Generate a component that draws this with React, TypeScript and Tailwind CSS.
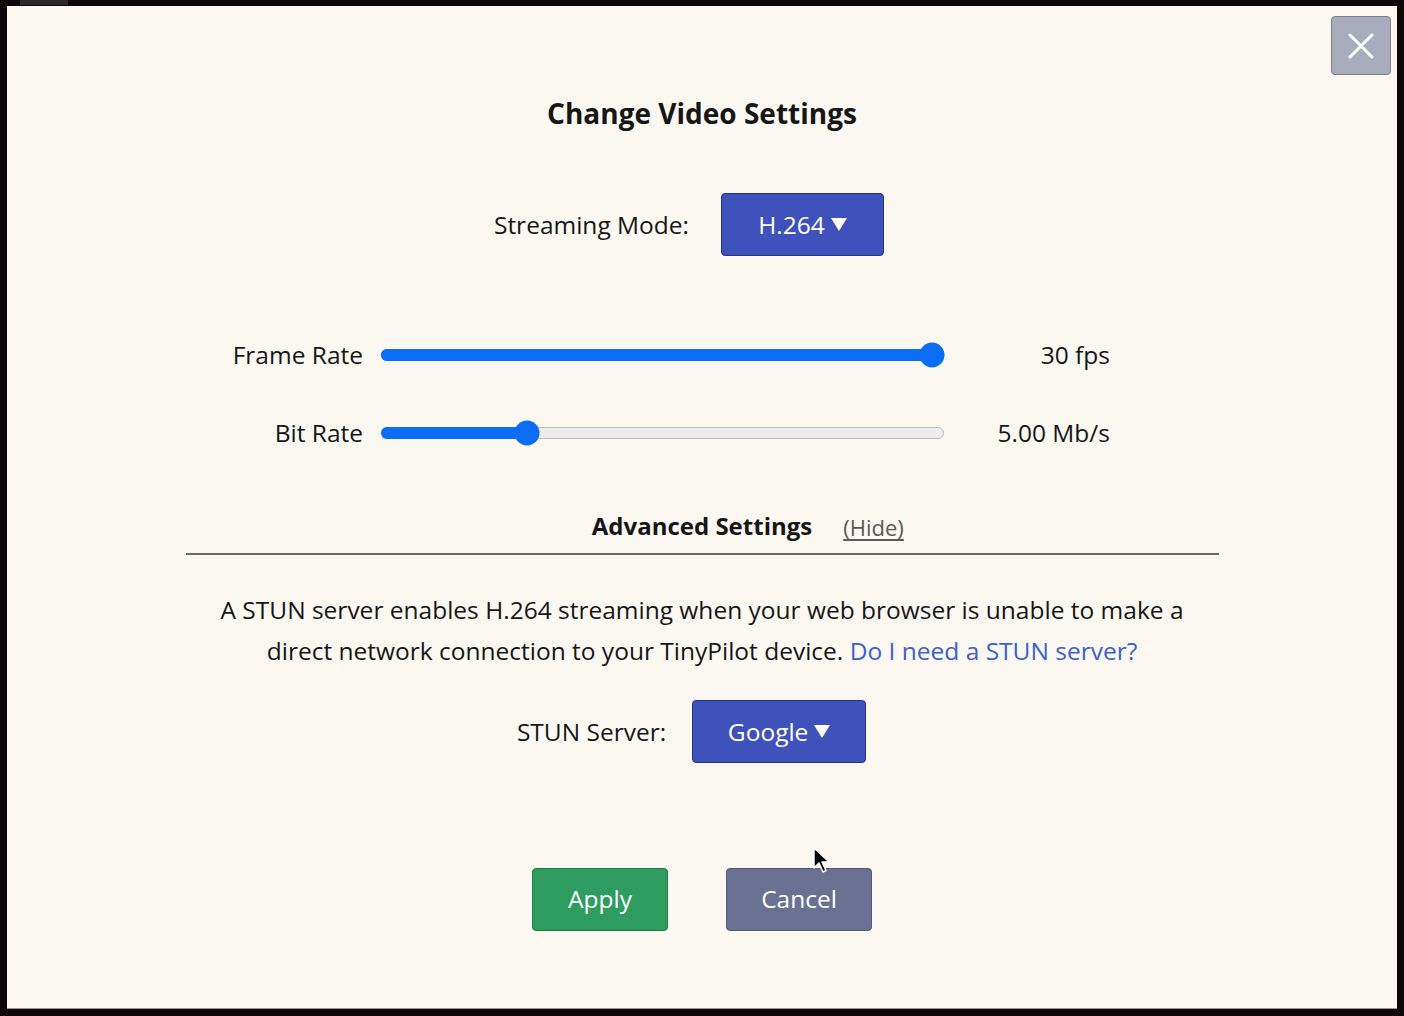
import React from "react";

const font = { fontFamily: '"Open Sans", "Lato", sans-serif' };

function Slider({ pct, full }: { pct: number; full?: boolean }) {
  const pos = 12.5 + (pct / 100) * (563 - 25);
  return (
    <div className="relative h-[12px] w-[563px]">
      <div
        className={
          full
            ? "absolute inset-0 rounded-full bg-[#0b6cf5]"
            : "absolute inset-0 rounded-full bg-[#ececec] border border-[#bdbdbd]"
        }
      />
      <div
        className="absolute left-0 top-0 h-[12px] rounded-full bg-[#0b6cf5]"
        style={{ width: `${pos}px` }}
      />
      <div
        className="absolute top-1/2 h-[25px] w-[25px] -translate-x-1/2 -translate-y-1/2 rounded-full bg-[#0b6cf5]"
        style={{ left: `${pos}px` }}
      />
    </div>
  );
}

export default function App() {
  return (
    <div
      className="relative h-[1016px] w-[1404px] bg-[#0d0709] pt-[6px] pl-[7px] pr-[7px] pb-[7px] text-[#161616]"
      style={font}
    >
      <div className="absolute left-[20px] top-0 h-[5px] w-[48px] bg-[#2c2729]" />
      <div className="relative flex h-full flex-col items-center bg-[#fbf8f2] border-b border-[#9a9a9a]">
        {/* Close button */}
        <button className="absolute right-[6px] top-[10px] flex h-[59px] w-[60px] items-center justify-center rounded-[4px] border border-[#7d7e86] bg-[#a9acbd]">
          <svg width="26" height="26" viewBox="0 0 26 26" fill="none">
            <path d="M2 2 L24 24 M24 2 L2 24" stroke="#ffffff" strokeWidth="3" strokeLinecap="round" />
          </svg>
        </button>

        <h1 className="mt-[89px] text-[28px] leading-[36px] font-bold">Change Video Settings</h1>

        <div className="mt-[62px] flex items-center gap-[32px] pr-[26px]">
          <span className="text-[24.5px] leading-[32px]">Streaming Mode:</span>
          <button className="flex h-[63px] w-[163px] items-center justify-center gap-[6px] rounded-[4px] border border-[#27338a] bg-[#3f51bb] text-[24.5px] leading-[32px] text-white">
            <span>H.264</span>
            <svg width="16" height="14" viewBox="0 0 16 14">
              <path d="M0 0 H16 L8 13 Z" fill="#ffffff" />
            </svg>
          </button>
        </div>

        <div className="mt-[79px] flex flex-col gap-[38px] self-start ml-[216px]">
          <div className="flex h-[40px] items-center">
            <span className="w-[140px] text-right text-[24.5px] whitespace-nowrap">Frame Rate</span>
            <div className="ml-[18px]">
              <Slider pct={100} full />
            </div>
            <span className="w-[166px] text-right text-[24.5px]">30 fps</span>
          </div>
          <div className="flex h-[40px] items-center">
            <span className="w-[140px] text-right text-[24.5px] whitespace-nowrap">Bit Rate</span>
            <div className="ml-[18px]">
              <Slider pct={24.8} />
            </div>
            <span className="w-[166px] text-right text-[24.5px]">5.00 Mb/s</span>
          </div>
        </div>

        <div className="mt-[57px] flex h-[32px] items-center">
          <span className="relative text-[24px] font-bold leading-[32px]">
            Advanced Settings
            <span className="absolute left-full top-[1px] ml-[31px] text-[22px] font-normal text-[#5a5a5a] underline underline-offset-[3px]">
              (Hide)
            </span>
          </span>
        </div>

        <div className="mt-[11px] h-[2px] w-[1033px] bg-[#6a6a6a]" />

        <p className="mt-[34px] text-center text-[24.5px] leading-[41px]">
          A STUN server enables H.264 streaming when your web browser is unable to make a
          <br />
          direct network connection to your TinyPilot device.{" "}
          <a className="text-[#3d5fcf]">Do I need a STUN server?</a>
        </p>

        <div className="mt-[29px] flex items-center gap-[26px] pr-[21px]">
          <span className="text-[24.5px] leading-[32px]">STUN Server:</span>
          <button className="flex h-[63px] w-[174px] items-center justify-center gap-[6px] rounded-[4px] border border-[#27338a] bg-[#3f51bb] text-[24.5px] leading-[32px] text-white">
            <span>Google</span>
            <svg width="16" height="14" viewBox="0 0 16 14">
              <path d="M0 0 H16 L8 13 Z" fill="#ffffff" />
            </svg>
          </button>
        </div>

        <div className="mt-[105px] flex items-center gap-[58px]">
          <button className="h-[63px] w-[136px] rounded-[4px] border border-[#1f7a45] bg-[#2e9b5f] pb-[2px] text-[24.5px] leading-[32px] text-white">
            Apply
          </button>
          <button className="h-[63px] w-[146px] rounded-[4px] border border-[#53597a] bg-[#6b7192] pb-[2px] text-[24.5px] leading-[32px] text-white">
            Cancel
          </button>
        </div>

        {/* mouse cursor */}
        <svg
          className="absolute left-[806px] top-[841px]"
          width="18"
          height="28"
          viewBox="0 0 18 28"
        >
          <path
            d="M1 1 L1 21 L6 16 L10 25 L13 23.5 L9 15 L16 15 Z"
            fill="#000000"
            stroke="#ffffff"
            strokeWidth="1.5"
            strokeLinejoin="round"
          />
        </svg>
      </div>
    </div>
  );
}
